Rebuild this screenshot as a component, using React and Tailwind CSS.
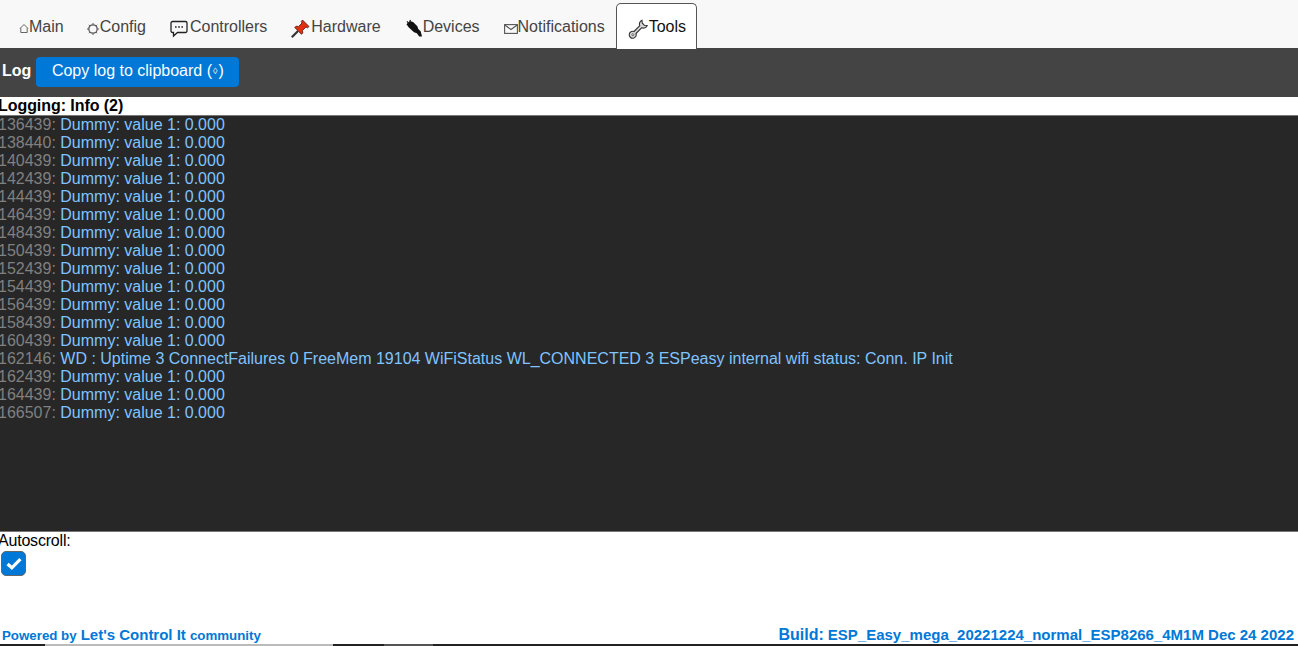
const dummy = (t) => [t, "Dummy: value 1: 0.000"];
const lines = [
  ...["136439","138440","140439","142439","144439","146439","148439","150439","152439","154439","156439","158439","160439"].map(dummy),
  ["162146","WD : Uptime 3 ConnectFailures 0 FreeMem 19104 WiFiStatus WL_CONNECTED 3 ESPeasy internal wifi status: Conn. IP Init"],
  ...["162439","164439","166507"].map(dummy),
];

const Home = () => (
  <svg width="10" height="10" viewBox="0 0 10 10" className="mt-[5px] shrink-0" fill="none" stroke="#666" strokeWidth="1"><path d="M1 5.500 5 1.500 9 5.500M1.800 5V9.500H8.200V5" /></svg>
);
const Gear = () => (
  <svg width="14" height="14" viewBox="0 0 14 14" className="mt-[4px] shrink-0" fill="none" stroke="#555"><circle cx="7" cy="7" r="4.200" strokeWidth="1.300" /><path d="M7 1v1.500M7 11.500V13M1 7h1.500M11.500 7H13M2.800 2.800l1 1M10.200 10.200l1 1M2.800 11.200l1-1M10.200 3.800l1-1" strokeWidth="1" /></svg>
);
const Chat = () => (
  <svg width="20" height="18" viewBox="0 0 20 18" className="mt-[2px] shrink-0" fill="none" stroke="#222"><path d="M2.500 1.500h13a1.500 1.500 0 0 1 1.500 1.500v8a1.500 1.500 0 0 1-1.500 1.500H7.500l-4 3.500V12.500h-1A1.500 1.500 0 0 1 1 11V3a1.500 1.500 0 0 1 1.500-1.500Z" strokeWidth="1.300" /><path d="M5 7h1.600M8.200 7h1.600M11.400 7H13" strokeWidth="1.600" /></svg>
);
const Pin = () => (
  <svg width="20" height="20" viewBox="0 0 20 20" className="mt-[1px] shrink-0"><path d="M0.800 18.200 7 12" stroke="#333" strokeWidth="2.200" /><path d="M11.500 1 18 7.500 16.500 8.800 15 8 11.500 11.500 11.800 14 10.500 15.300 3.700 8.500 5 7.200 7.500 7.500 11 4 10.300 2.500Z" fill="#e0300f" stroke="#4a1a10" strokeWidth="0.800" /></svg>
);
const Plug = () => (
  <svg width="17" height="19" viewBox="0 0 18 19" className="mt-[1px] shrink-0"><path d="M0.500 5 4 1.500 7.500 2.500 12 7 13 10 15.500 12.500 17 18 14 18 11.500 14.500 8.500 13.500 3 8.500Z" fill="#111" /><path d="M2.500 3.500 1 2M5 1.800 4 0.500" stroke="#111" strokeWidth="1.200" /></svg>
);
const Mail = () => (
  <svg width="14" height="10" viewBox="0 0 14 10" className="mt-[6px] shrink-0" fill="none" stroke="#555" strokeWidth="1.100"><rect x="0.600" y="0.600" width="12.800" height="8.800" /><path d="M0.800 1 7 5.500 13.200 1" /></svg>
);
const Wrench = () => (
  <svg width="21" height="20" viewBox="0 0 20 20" className="mt-[1px] shrink-0"><path d="M5.500 12.500 11.300 6.700A4 4 0 0 1 13.500 1.300L13.800 4.200 15.800 6.200 18.700 6.500A4 4 0 0 1 13.300 8.700L7.500 14.500A3.500 3.500 0 1 1 5.500 12.500Z" fill="#d8d8d8" stroke="#333" strokeWidth="1.100" /><circle cx="4.300" cy="15.700" r="1" fill="#fff" stroke="#333" strokeWidth="0.700" /></svg>
);

const tabs = [
  ["Main", Home, "ml-[10px] mr-[22px]"],
  ["Config", Gear, "mr-[24px]"],
  ["Controllers", Chat, "mr-[24px]"],
  ["Hardware", Pin, "mr-[25px]"],
  ["Devices", Plug, "mr-[24px]"],
  ["Notifications", Mail, "mr-[11px]"],
];

export default function App() {
  return (
    <div className="relative flex h-[646px] flex-col overflow-hidden bg-white font-['Liberation_Sans',Arial,sans-serif] text-[16px] leading-[18px] text-black">
      <nav className="flex h-[48px] items-start bg-[#f8f8f8] pl-[9px] pt-[3px]">
        {tabs.map(([name, Icon, cls]) => (
          <a key={name} className={`flex h-[45px] items-start pt-[15px] text-[#444] ${cls}`}>
            <Icon />
            <span>{name}</span>
          </a>
        ))}
        <a className="z-10 flex h-[46px] items-start rounded-t-[5px] border border-b-0 border-[#555] bg-white pl-[11px] pr-[10px] pt-[14px] text-[#111]">
          <Wrench />
          <span>Tools</span>
        </a>
      </nav>

      <header className="flex h-[49px] items-start bg-[#444] pl-[2px] pt-[9px]">
        <h1 className="mt-[5px] text-[16px] font-bold text-white">Log</h1>
        <button className="ml-[5px] flex h-[30px] w-[203px] items-center justify-center rounded-[4px] bg-[#0078d7] pb-[2px] text-white">
          Copy log to clipboard (<span className="mx-[1px] text-[9px]">◊</span>)
        </button>
      </header>

      <div className="ml-[-2px] h-[18px] font-bold tracking-[-0.06px]">Logging: Info (2)</div>

      <div className="h-[417px] border-y border-[#777] bg-[#272727]">
        {lines.map(([t, m], i) => (
          <div key={i} className="ml-[-2px] h-[18px] whitespace-nowrap">
            <span className="text-[#808080]">{t}: </span>
            <span className="text-[#7fc4ff]">{m}</span>
          </div>
        ))}
      </div>

      <div className="ml-[-2px] h-[18px] tracking-[-0.2px]">Autoscroll:</div>
      <div className="pl-[1px] pt-[1px]">
        <div className="flex h-[25px] w-[25px] items-center justify-center rounded-[5px] border border-[#666] bg-[#0078d7]">
          <svg width="16" height="13" viewBox="0 0 15 12" fill="none" stroke="#fff" strokeWidth="3"><path d="M1.500 6.500 5.500 10 13.500 2" /></svg>
        </div>
      </div>

      <footer className="mt-auto flex h-[20px] items-start justify-between pl-[2px] pr-[4px] pt-[2px] font-bold text-[#0078d7]">
        <div className="flex items-baseline gap-[4px] text-[13.3px]">
          <span>Powered by</span>
          <span className="text-[15px]">Let's Control It</span>
          <span>community</span>
        </div>
        <div className="flex items-baseline gap-[4px] text-[15px]">
          <span className="text-[16px]">Build:</span>
          <span>ESP_Easy_mega_20221224_normal_ESP8266_4M1M Dec 24 2022</span>
        </div>
      </footer>
      <div className="flex h-[2px] bg-[#222]">
        <div className="ml-[45px] h-full w-[288px] bg-[#bbb]" />
        <div className="ml-[51px] h-full w-[49px] bg-[#555]" />
      </div>
    </div>
  );
}
